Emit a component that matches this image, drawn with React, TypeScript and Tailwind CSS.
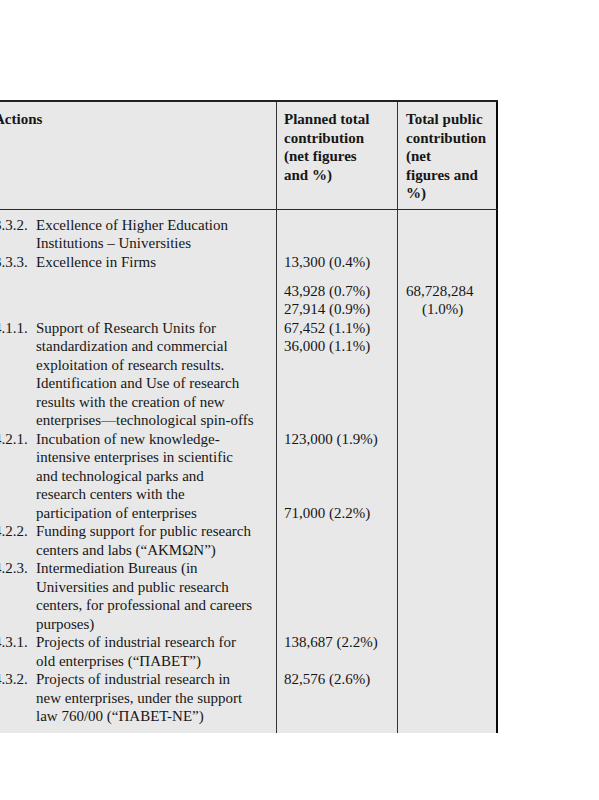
import React from "react";

interface Entry {
    num?: string;
    lines: string[];
}

const Line: React.FC<{ children?: React.ReactNode; className?: string }> = ({ children, className }) => (
    <div className={"h-[18.5px] leading-[18.5px] whitespace-nowrap " + (className ?? "")}>{children}</div>
);

const EntryRows: React.FC<{ entry: Entry }> = ({ entry }) => (
    <div className="flex">
        <div className="w-[42px] shrink-0 h-[18.5px] leading-[18.5px]">{entry.num}</div>
        <div>
            {entry.lines.map((l, i) => (
                <Line key={i}>{l}</Line>
            ))}
        </div>
    </div>
);

const firstBlock: Entry[] = [
    { num: "3.3.2.", lines: ["Excellence of Higher Education", "Institutions \u2013 Universities"] },
    { num: "3.3.3.", lines: ["Excellence in Firms"] },
];

const secondBlock: Entry[] = [
    {
        num: "4.1.1.",
        lines: [
            "Support of Research Units for",
            "standardization and commercial",
            "exploitation of research results.",
            "Identification and Use of research",
            "results with the creation of new",
            "enterprises\u2014technological spin-offs",
        ],
    },
    {
        num: "4.2.1.",
        lines: [
            "Incubation of new knowledge-",
            "intensive enterprises in scientific",
            "and technological parks and",
            "research centers with the",
            "participation of enterprises",
        ],
    },
    { num: "4.2.2.", lines: ["Funding support for public research", "centers and labs (\u201CAKM\u03A9N\u201D)"] },
    {
        num: "4.2.3.",
        lines: [
            "Intermediation Bureaus (in",
            "Universities and public research",
            "centers, for professional and careers",
            "purposes)",
        ],
    },
    { num: "4.3.1.", lines: ["Projects of industrial research for", "old enterprises (\u201C\u03A0ABET\u201D)"] },
    {
        num: "4.3.2.",
        lines: [
            "Projects of industrial research in",
            "new enterprises, under the support",
            "law 760/00 (\u201C\u03A0ABET-NE\u201D)",
        ],
    },
];

// planned contribution, one slot per text line of the second block
const plannedSecond: string[] = [
    "43,928 (0.7%)", "27,914 (0.9%)", "67,452 (1.1%)", "36,000 (1.1%)",
    "", "", "", "",
    "123,000 (1.9%)", "", "", "",
    "71,000 (2.2%)", "", "", "", "", "", "",
    "138,687 (2.2%)", "",
    "82,576 (2.6%)",
];

export default function App() {
    return (
        <div className="min-h-[800px] bg-white pt-[100px] font-['Liberation_Serif',serif] text-[15px] text-[#161616]">
            <div className="-ml-[14px] w-[512px] bg-[#e8e8e8] border-t-2 border-t-[#202020]">
                {/* header */}
                <div className="flex border-b-[1.5px] border-b-[#2a2a2a] font-bold">
                    <div className="w-[291px] shrink-0 border-r border-r-[#333] pl-[8px] pt-[8px] pb-[6px]">
                        <Line>Actions</Line>
                    </div>
                    <div className="w-[121px] shrink-0 border-r border-r-[#333] pl-[7px] pt-[8px] pb-[6px]">
                        <Line>Planned total</Line>
                        <Line>contribution</Line>
                        <Line>(net figures</Line>
                        <Line>and %)</Line>
                    </div>
                    <div className="w-[100px] shrink-0 border-r-2 border-r-[#0a0a0a] pl-[8px] pt-[8px] pb-[6px]">
                        <Line>Total public</Line>
                        <Line>contribution</Line>
                        <Line>(net</Line>
                        <Line>figures and</Line>
                        <Line>%)</Line>
                    </div>
                </div>

                {/* body */}
                <div className="flex">
                    <div className="w-[291px] shrink-0 border-r border-r-[#333] pl-[8px] pt-[6px] pb-[7px]">
                        {firstBlock.map((e, i) => (
                            <EntryRows key={i} entry={e} />
                        ))}
                        <div className="mt-[10.5px]">
                            <Line />
                            <Line />
                            {secondBlock.map((e, i) => (
                                <EntryRows key={i} entry={e} />
                            ))}
                        </div>
                    </div>
                    <div className="w-[121px] shrink-0 border-r border-r-[#333] pl-[7px] pt-[6px] pb-[7px]">
                        <Line />
                        <Line />
                        <Line>13,300 (0.4%)</Line>
                        <div className="mt-[10.5px]">
                            {plannedSecond.map((v, i) => (
                                <Line key={i}>{v}</Line>
                            ))}
                        </div>
                    </div>
                    <div className="w-[100px] shrink-0 border-r-2 border-r-[#0a0a0a] pl-[8px] pt-[6px] pb-[7px]">
                        <Line />
                        <Line />
                        <Line />
                        <div className="mt-[10.5px]">
                            <Line>68,728,284</Line>
                            <Line className="pl-[16px]">(1.0%)</Line>
                        </div>
                    </div>
                </div>
            </div>
        </div>
    );
}
